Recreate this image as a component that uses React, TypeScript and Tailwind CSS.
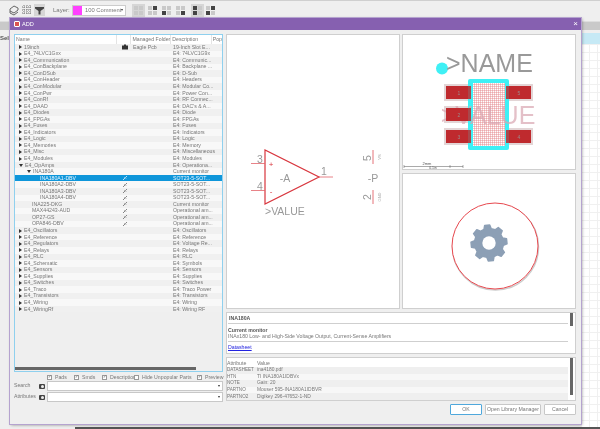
import React from 'react';

type TreeRow = { name: string; depth: number; arrow?: 'closed' | 'open'; icon?: 'case' | 'chip'; folder?: string; desc: string; selected?: boolean };

const top = (name: string, desc: string): TreeRow => ({ name, depth: 0, arrow: 'closed', desc });
const part = (name: string, depth: number, desc: string, selected = false): TreeRow => ({ name, depth, icon: 'chip', desc, selected });

const rows: TreeRow[] = [
  { name: '19inch', depth: 0, arrow: 'closed', icon: 'case', folder: 'Eagle Pcb', desc: '19-Inch Slot E...' },
  top('E4_74LVC1Gxx', 'E4: 74LVC1G9x'),
  top('E4_Communication', 'E4: Communic...'),
  top('E4_ConBackplane', 'E4: Backplane ...'),
  top('E4_ConDSub', 'E4: D-Sub'),
  top('E4_ConHeader', 'E4: Headers'),
  top('E4_ConModular', 'E4: Modular Co...'),
  top('E4_ConPwr', 'E4: Power Con...'),
  top('E4_ConRf', 'E4: RF Connec...'),
  top('E4_DAAD', "E4: DAC's & A..."),
  top('E4_Diodes', 'E4: Diode'),
  top('E4_FPGAs', 'E4: FPGAs'),
  top('E4_Fuses', 'E4: Fuses'),
  top('E4_Indicators', 'E4: Indicators'),
  top('E4_Logic', 'E4: Logic'),
  top('E4_Memories', 'E4: Memory'),
  top('E4_Misc', 'E4: Miscellaneous'),
  top('E4_Modules', 'E4: Modules'),
  { name: 'E4_OpAmps', depth: 0, arrow: 'open', desc: 'E4: Operationa...' },
  { name: 'INA180A', depth: 1, arrow: 'open', desc: 'Current monitor' },
  part('INA180A1-DBV', 2, 'SOT23-5-SOT...', true),
  part('INA180A2-DBV', 2, 'SOT23-5-SOT...'),
  part('INA180A3-DBV', 2, 'SOT23-5-SOT...'),
  part('INA180A4-DBV', 2, 'SOT23-5-SOT...'),
  part('INA225-DKG', 1, 'Current monitor'),
  part('MAX44243-AUD', 1, 'Operational am...'),
  part('OP27-GS', 1, 'Operational am...'),
  part('OPA846-DBV', 1, 'Operational am...'),
  top('E4_Oscillators', 'E4: Oscillators'),
  top('E4_Reference', 'E4: Reference'),
  top('E4_Regulators', 'E4: Voltage Re...'),
  top('E4_Relays', 'E4: Relays'),
  top('E4_RLC', 'E4: RLC'),
  top('E4_Schematic', 'E4: Symbols'),
  top('E4_Sensors', 'E4: Sensors'),
  top('E4_Supplies', 'E4: Supplies'),
  top('E4_Switches', 'E4: Switches'),
  top('E4_Traco', 'E4: Traco Power'),
  top('E4_Transistors', 'E4: Transistors'),
  top('E4_Wiring', 'E4: Wiring'),
  top('E4_WiringRf', 'E4: Wiring RF'),
];

const attributes = [
  ['DATASHEET', 'ina4180.pdf'],
  ['HTN', 'TI INA180A1IDBVx'],
  ['NOTE', 'Gain: 20'],
  ['PARTNO', 'Mouser 595-INA180A1IDBVR'],
  ['PARTNO2', 'Digikey 296-47652-1-ND'],
];

const options = [
  { label: 'Pads', checked: true, w: 'w-[19px]' },
  { label: 'Smds', checked: true, w: 'w-[20px]' },
  { label: 'Description', checked: true, w: 'w-[24px]' },
  { label: 'Hide Unpopular Parts', checked: false, w: 'w-[55px]' },
  { label: 'Preview', checked: true, w: 'w-[18px]' },
];

// pads of the sot23-5 footprint: x, y, number
const pads: [number, number, string][] = [
  [446, 86, '1'],
  [446, 108, '2'],
  [446, 130, '3'],
  [506, 130, '4'],
  [506, 86, '5'],
];

function gearPoints() {
  const pts: string[] = [];
  const teeth = 8;
  const step = (Math.PI * 2) / teeth;
  for (let i = 0; i < teeth; i++) {
    const a = i * step - Math.PI / 2 - 0.1;
    [[-0.32, 14.5], [-0.18, 18], [0.18, 18], [0.32, 14.5]].forEach(([k, r]) => {
      const t = a + k * step;
      pts.push(`${(489 + r * Math.cos(t)).toFixed(1)},${(242 + r * Math.sin(t)).toFixed(1)}`);
    });
  }
  return pts.join(' ');
}

function ChipIcon({ light }: { light?: boolean }) {
  return (
    <svg width="6" height="6" viewBox="0 0 6 6" fill="none" stroke={light ? '#cfe9f8' : '#777'} strokeWidth="0.9">
      <path d="M1 5 L3 3 M2.5 2 L4 3.5 M3.5 2.5 L5 1" />
    </svg>
  );
}

function CaseIcon() {
  return (
    <svg width="6" height="6" viewBox="0 0 6 6" fill="#333">
      <path d="M0 1.5h6V5.5H0z M2 0.5h2v1H2z" />
    </svg>
  );
}

function TreeLine({ row, index }: { row: TreeRow; index: number }) {
  const stripe = index % 2 === 0 ? 'bg-[#f0f0f0]' : 'bg-[#f8f8f8]';
  return (
    <div className={`flex h-[6.55px] items-center leading-none ${row.selected ? 'bg-[#0f96da] text-[#e8f6ff]' : `${stripe} text-[#777]`}`}>
      <div className={`flex w-[102px] items-center ${row.depth === 0 ? 'pl-[4px]' : row.depth === 1 ? 'pl-[12px]' : 'pl-[25px]'}`}>
        {row.arrow === 'closed' && <span className="mr-[2px] h-0 w-0 border-y-[2px] border-l-[3px] border-y-transparent border-l-[#333]" />}
        {row.arrow === 'open' && <span className="mr-[2px] h-0 w-0 border-x-[2px] border-t-[3px] border-x-transparent border-t-[#333]" />}
        {row.depth === 1 && !row.arrow && <span className="w-[5px]" />}
        <span className="whitespace-nowrap">{row.name}</span>
      </div>
      <div className="flex w-[15px] justify-center">
        {row.icon === 'case' && <CaseIcon />}
        {row.icon === 'chip' && <ChipIcon light={row.selected} />}
      </div>
      <div className="w-[41px] pl-[1px] whitespace-nowrap">{row.folder}</div>
      <div className="w-[41px] whitespace-nowrap">{row.desc}</div>
    </div>
  );
}

function ComboRow({ label }: { label: string }) {
  return (
    <div className="flex h-[10px] items-center leading-none text-[#777]">
      <span className="w-[25px] whitespace-nowrap">{label}</span>
      <span className="mr-[2px] flex h-[5px] w-[6px] items-center justify-end rounded-[1px] bg-[#444]">
        <span className="mr-[1px] h-[3px] w-[3px] rounded-full bg-[#eee]" />
      </span>
      <div className="flex h-[10px] flex-1 items-center justify-end border border-[#c8c8c8] bg-white pr-[2px]">
        <span className="h-0 w-0 border-x-[1.5px] border-t-[2px] border-x-transparent border-t-[#333]" />
      </div>
    </div>
  );
}

function ToolIcon({ filled, active }: { filled: number[]; active?: boolean }) {
  return (
    <div className={`flex h-[13px] w-[13px] items-center justify-center ${active ? 'bg-[#d6d6d6]' : ''}`}>
      <svg width="9" height="9" viewBox="0 0 9 9">
        {[[0, 0], [5, 0], [0, 5], [5, 5]].map(([x, y], i) => (
          <rect key={i} x={x} y={y} width="4" height="4" fill={filled.includes(i) ? '#444' : '#c9c9c9'} />
        ))}
      </svg>
    </div>
  );
}

export default function App() {
  return (
    <div className="relative h-[429px] w-[600px] overflow-hidden bg-[#efefef] text-[5.2px] leading-[6px] blur-[0.3px] [font-family:'Liberation_Sans',sans-serif]">
      {/* Main window behind the dialog */}
      <div className="h-px bg-[#cfcfcf]" />
      <div className="flex h-[21px] items-center border-b border-[#dedede] pb-[2px] pl-[9px] text-[#666]">
        <svg width="10" height="12" viewBox="0 0 10 12" fill="none" stroke="#666" className="mr-[2px]">
          <path d="M1 5 L5 2 L9 4 L9 6 L5 9 L1 7 Z M1 7 L1 9 L5 11 L9 8" />
        </svg>
        <svg width="12" height="12" viewBox="0 0 12 12" stroke="#777" strokeWidth="1" className="mr-[1px]">
          <path d="M3 1V11M6 1V11M9 1V11M1 3H11M1 6H11M1 9H11" strokeDasharray="1 1" />
        </svg>
        <div className="flex h-[12px] w-[11px] items-center justify-center bg-[#d6d6d6]">
          <svg width="9" height="9" viewBox="0 0 9 9" fill="#444">
            <path d="M0 1h9v1.5L5.5 5v3.5h-2V5L0 2.5z" />
          </svg>
        </div>
        <span className="ml-[8px] w-[19px] text-[6px] text-[#777]">Layer:</span>
        <div className="flex h-[11px] w-[54px] items-center border border-[#ccc] bg-white">
          <span className="h-[9px] w-[9px] flex-none bg-[#ff40ff]" />
          <span className="ml-[3px] flex-1 text-[5.8px] whitespace-nowrap text-[#777]">100 Comment</span>
          <span className="mr-[2px] h-0 w-0 flex-none border-x-[1.5px] border-t-[2px] border-x-transparent border-t-[#333]" />
        </div>
        <div className="ml-[6px] flex gap-[1px]">
          <ToolIcon filled={[]} active />
          <ToolIcon filled={[1]} />
          <ToolIcon filled={[2]} />
          <ToolIcon filled={[3]} />
        </div>
        <div className="ml-[4px] flex">
          <ToolIcon filled={[0, 2]} active />
          <ToolIcon filled={[1, 2]} />
        </div>
      </div>
      <div className="h-[8px] bg-[#c9c9c9]" />
      <div className="pt-[5px] text-[6px] font-bold whitespace-nowrap text-[#555]">Sele</div>
      <div className="absolute top-[33px] left-[581px] h-[11px] w-[19px] bg-[#c6e9f5]" />
      <div className="absolute top-[44px] left-[581px] h-[385px] w-[19px] bg-white bg-[linear-gradient(#f0f0f0_1px,transparent_1px),linear-gradient(90deg,#f0f0f0_1px,transparent_1px)] bg-[length:8px_8px]" />
      <div className="absolute bottom-0 left-[75px] h-[2px] w-[525px] bg-[#555]" />

      {/* ADD dialog */}
      <div className="absolute top-[18px] left-[10px] flex h-[406px] w-[571px] flex-col bg-[#efefef] shadow-[0_0_0_1px_#b5a3cf,1px_1px_3px_rgba(0,0,0,0.4)]">
        <div className="flex h-[12px] flex-none items-center bg-[#8660b0] pr-[3px] pl-[4px] text-white">
          <span className="mr-[2px] h-[6px] w-[6px] rounded-[1px] border border-white bg-[#d9534f]" />
          <span className="text-[5.6px]">ADD</span>
          <span className="ml-auto text-[8px] leading-none">×</span>
        </div>

        <div className="flex h-[368px] flex-none gap-[3px] pt-[4px] pl-[4px]">
          {/* Library tree */}
          <div className="flex w-[209px] flex-col">
            <div className="relative flex h-[338px] flex-none flex-col overflow-hidden border border-[#8fd0ee] bg-[#efefef]">
              <div className="flex h-[9px] flex-none items-center whitespace-nowrap bg-white leading-[9px] text-[#777]">
                <span className="w-[102px] pl-[1px]">Name</span>
                <span className="h-full w-[15px] border-x border-[#e4e4e4]" />
                <span className="h-full w-[41px] border-r border-[#e4e4e4] pl-[2px]">Managed Folder</span>
                <span className="h-full w-[41px] border-r border-[#e4e4e4] pl-[1px]">Description</span>
                <span className="pl-[1px]">Pop</span>
              </div>
              {rows.map((row, i) => (
                <TreeLine key={row.name} row={row} index={i} />
              ))}
              <div className="absolute bottom-[1px] left-0 h-[3px] w-[181px] bg-[#666]" />
            </div>
            <div className="mt-[2px] flex h-[7px] items-center pl-[33px] text-[#777]">
              {options.map((o) => (
                <label key={o.label} className="flex items-center whitespace-nowrap">
                  <span className="mr-[3px] flex h-[5px] w-[5px] items-center justify-center border border-[#999] bg-white text-[4px] leading-none text-[#555]">
                    {o.checked ? '✓' : ''}
                  </span>
                  <span className={o.w}>{o.label}</span>
                </label>
              ))}
            </div>
            <div className="mt-[1px] flex flex-col gap-[1px]">
              <ComboRow label="Search" />
              <ComboRow label="Attributes" />
            </div>
          </div>

          {/* Previews and details */}
          <div className="flex w-[350px] flex-col gap-[3px]">
            <div className="flex h-[275px] flex-none gap-[2px]">
              <div className="h-full w-[174px] border border-[#cfcfcf] bg-white">
                <svg viewBox="227 35 172 273" width="172" height="273" className="block [font-family:'Liberation_Sans',sans-serif]">
                  <path d="M265 150 L265 204 L319 177 Z" fill="none" stroke="#d8353d" strokeWidth="1.2" />
                  <path d="M251 163.5H265M251 190.5H265M319 177H333" stroke="#e2636a" strokeWidth="0.8" />
                  <text x="271" y="167" fontSize="8" fill="#d8353d" textAnchor="middle">+</text>
                  <text x="271" y="194" fontSize="8" fill="#d8353d" textAnchor="middle">-</text>
                  <text x="260" y="163" fontSize="10.5" fill="#999" textAnchor="middle">3</text>
                  <text x="260" y="190" fontSize="10.5" fill="#999" textAnchor="middle">4</text>
                  <text x="324" y="175" fontSize="10.5" fill="#999" textAnchor="middle">1</text>
                  <text x="285" y="182" fontSize="10.5" fill="#999" textAnchor="middle">-A</text>
                  <text x="265" y="215" fontSize="10.5" fill="#999">&gt;VALUE</text>
                  <text x="373" y="182" fontSize="10.5" fill="#999" textAnchor="middle">-P</text>
                  <path d="M373 150V164M373 190V204" stroke="#e2636a" strokeWidth="0.9" />
                  <text transform="translate(371 158) rotate(-90)" fontSize="10.5" fill="#999" textAnchor="middle">5</text>
                  <text transform="translate(371 197) rotate(-90)" fontSize="10.5" fill="#999" textAnchor="middle">2</text>
                  <text transform="translate(381 157) rotate(-90)" fontSize="4" fill="#aaa" textAnchor="middle">VS</text>
                  <text transform="translate(381 197) rotate(-90)" fontSize="4" fill="#aaa" textAnchor="middle">GND</text>
                </svg>
              </div>
              <div className="flex w-[174px] flex-col gap-[3px]">
                <div className="h-[136px] flex-none border border-[#cfcfcf] bg-white">
                  <svg viewBox="403 35 172 134" width="172" height="134" className="block [font-family:'Liberation_Sans',sans-serif]">
                    <defs>
                      <pattern id="hatch" width="2" height="2" patternUnits="userSpaceOnUse">
                        <path d="M0 0H2M0 0V2" stroke="#e2787c" strokeWidth="0.8" />
                      </pattern>
                    </defs>
                    <circle cx="442" cy="68.5" r="6" fill="#3ff0f5" />
                    <text x="446" y="72" fontSize="25" fill="#999">&gt;NAME</text>
                    {pads.map(([x, y, n]) => (
                      <rect key={n} x={x - 2} y={y - 2} width="29" height="17" fill="#e3d5d6" />
                    ))}
                    <rect x="468" y="79" width="41" height="71" rx="2" fill="#3ff0f5" />
                    <rect x="473" y="83" width="32" height="63" fill="#fff" />
                    <rect x="473" y="83" width="32" height="63" fill="url(#hatch)" />
                    <text x="488" y="124" fontSize="25" fill="#d9a5b0" fillOpacity="0.7" textAnchor="middle">&gt;VALUE</text>
                    {pads.map(([x, y, n]) => (
                      <g key={n}>
                        <rect x={x} y={y} width="25" height="13" fill="#bf2a2e" />
                        <rect x={x < 480 ? 468 : 506} y={y} width={3} height="13" fill="#a8484c" />
                        <text x={x + 13} y={y + 9} fontSize="5" fill="#9a8a8a" textAnchor="middle">{n}</text>
                      </g>
                    ))}
                    <path d="M404 166.5H463M404 165V168M450 165V168M463 165V168" stroke="#555" strokeWidth="0.5" />
                    <text x="427" y="165" fontSize="4" fill="#555" textAnchor="middle">2mm</text>
                    <text x="433" y="169" fontSize="3.5" fill="#555" textAnchor="middle">0.1in</text>
                  </svg>
                </div>
                <div className="h-[136px] flex-none border border-[#cfcfcf] bg-white">
                  <svg viewBox="403 173 172 134" width="172" height="134" className="block">
                    <circle cx="495.5" cy="246" r="43" fill="none" stroke="#ccc" strokeWidth="1.5" />
                    <circle cx="495" cy="245" r="43" fill="#fff" stroke="#e8494f" strokeWidth="1" />
                    <polygon points={gearPoints()} fill="#8c9fb5" stroke="#8c9fb5" strokeWidth="1.5" strokeLinejoin="round" />
                    <circle cx="489" cy="242" r="6.7" fill="#fff" />
                  </svg>
                </div>
              </div>
            </div>

            <div className="relative h-[42px] flex-none border border-[#cfcfcf] bg-white pl-[1px] text-[#777]">
              <div className="mr-[7px] flex h-[11px] items-center border-b border-[#cfcfcf] pl-[1px] font-bold text-[#555]">INA180A</div>
              <div className="mt-[3px] font-bold text-[#555]">Current monitor</div>
              <div className="mr-[7px] border-b border-[#cfcfcf] pb-[2px] whitespace-nowrap">INAx180 Low- and High-Side Voltage Output, Current-Sense Amplifiers</div>
              <div className="mt-[2px] text-[#2323e0] underline">Datasheet</div>
              <div className="absolute top-0 right-[2px] h-[13px] w-[3px] bg-[#666]" />
            </div>

            <div className="relative h-[44px] flex-none overflow-hidden border border-[#cfcfcf] bg-white text-[#777]">
              <div className="flex h-[9px] items-center">
                <span className="w-[30px]">Attribute</span>
                <span>Value</span>
              </div>
              {attributes.map(([k, v], i) => (
                <div key={k} className={`mr-[7px] flex h-[6.6px] items-center whitespace-nowrap ${i % 2 === 0 ? 'bg-[#efefef]' : 'bg-[#f7f7f7]'}`}>
                  <span className="w-[30px] text-[4.6px]">{k}</span>
                  <span className="text-[4.9px]">{v}</span>
                </div>
              ))}
              <div className="mr-[7px] h-[2px] bg-[#efefef]" />
              <div className="absolute top-0 right-[2px] h-[37px] w-[3px] bg-[#666]" />
            </div>
          </div>
        </div>

        <div className="flex flex-none justify-end gap-[3px] pt-[6px] pr-[5px] leading-none text-[#777]">
          <button className="h-[11px] w-[32px] rounded-[1px] border-[1.5px] border-[#4fa8dc] bg-white">OK</button>
          <button className="h-[11px] w-[56px] rounded-[1px] border border-[#c8c8c8] bg-white whitespace-nowrap">Open Library Manager</button>
          <button className="h-[11px] w-[32px] rounded-[1px] border border-[#c8c8c8] bg-white">Cancel</button>
        </div>
      </div>
    </div>
  );
}
